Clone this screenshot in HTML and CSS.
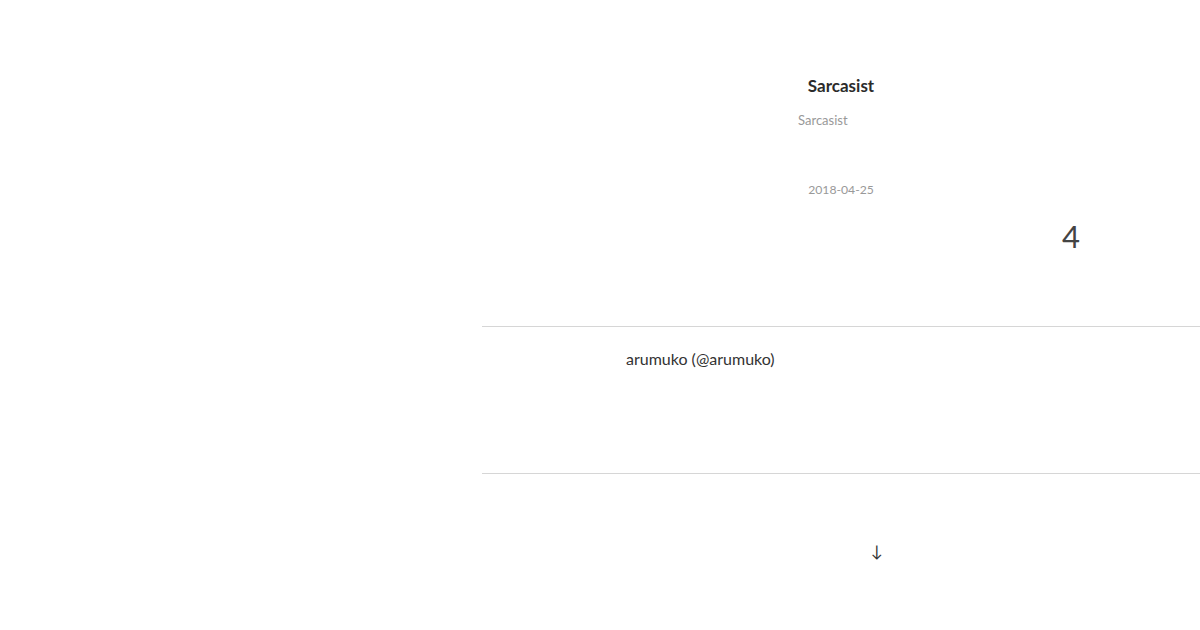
FILE: index.html
```html
<!DOCTYPE html>
<html lang="ja">
<head>
    <meta charset="UTF-8">
    <title>Sarcasist</title>
    <link rel="stylesheet" href="styles.css">
</head>
<body>
    <main class="page">
        <header class="head">
            <h1 class="title">Sarcasist</h1>
            <p class="sub">Sarcasist</p>
            <p class="date">2018-04-25</p>
            <div class="count">4</div>
        </header>
        <section class="author">
            <p class="name">arumuko (@arumuko)</p>
        </section>
        <footer class="more">
            <span class="arrow">↓</span>
        </footer>
    </main>
</body>
</html>
```

FILE: styles.css
```css
body {
    margin: 0;
    background-color: #fff;
    font-family: 'Lato', 'Noto Sans', sans-serif;
    color: #333;
}

.page {
    margin-left: 482px;
    width: 718px;
}

.head {
    height: 326px;
    padding-top: 75px;
    box-sizing: border-box;
    text-align: center;
}

.title {
    margin: 0;
    font-size: 17px;
    font-weight: bold;
    line-height: 22px;
    color: #2b2b2b;
}

.sub {
    margin: 14px 0 0 316px;
    text-align: left;
    font-size: 13px;
    line-height: 18px;
    color: #999;
}

.date {
    margin: 52px 0 0;
    font-size: 12.2px;
    line-height: 18px;
    color: #999;
}

.count {
    margin: 17px 120px 0 0;
    text-align: right;
    font-size: 31px;
    font-weight: 400;
    line-height: 40px;
    color: #444;
}

.author {
    height: 148px;
    border-top: 1px solid #d6d6d6;
    border-bottom: 1px solid #d6d6d6;
    box-sizing: border-box;
}

.name {
    margin: 22px 0 0 144px;
    font-size: 16px;
    line-height: 20px;
    color: #333;
}

.more {
    padding-top: 67px;
    padding-left: 389px;
    font-size: 16px;
    color: #333;
}
```
